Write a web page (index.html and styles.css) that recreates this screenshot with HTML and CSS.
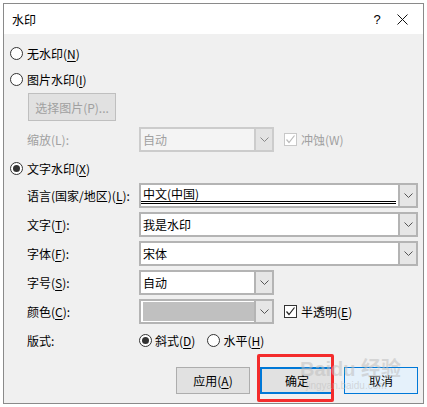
FILE: index.html
```html
<!DOCTYPE html>
<html lang="zh-CN">
<head>
    <meta charset="UTF-8">
    <title>水印</title>
    <link rel="stylesheet" href="styles.css">
</head>
<body>
    <div class="dialog">
        <div class="titlebar">
            <span class="title">水印</span>
            <span class="help">?</span>
            <span class="close">
                <svg width="11" height="11" viewBox="0 0 11 11"><path d="M0.5 0.5 L10.5 10.5 M10.5 0.5 L0.5 10.5" stroke="#111" stroke-width="1" fill="none"/></svg>
            </span>
        </div>

        <div class="content">
            <!-- watermark type -->
            <div class="radio-row"><span class="radio"></span><span>无水印(<u>N</u>)</span></div>
            <div class="radio-row"><span class="radio"></span><span>图片水印(<u>I</u>)</span></div>
            <div class="pic-btn">选择图片(P)...</div>

            <div class="field first disabled">
                <span class="label">缩放(L):</span>
                <div class="select narrow off">
                    <span class="value">自动</span>
                    <span class="arrow"><svg width="9" height="5" viewBox="0 0 9 5"><path d="M0.5 0.5 L4.5 4.5 L8.5 0.5" stroke="#888" fill="none"/></svg></span>
                </div>
                <span class="check off"><svg width="11" height="11" viewBox="0 0 11 11"><path d="M1.5 5.5 L4 8.5 L9.5 1.5" stroke="#bbb" stroke-width="1.2" fill="none"/></svg></span>
                <span class="check-text">冲蚀(W)</span>
            </div>

            <div class="radio-row text-mark"><span class="radio on"></span><span>文字水印(<u>X</u>)</span></div>

            <!-- text watermark settings -->
            <div class="field lang">
                <span class="label">语言(国家/地区)(<u>L</u>):</span>
                <div class="select wide">
                    <span class="value dbl">中文(中国)</span>
                    <span class="arrow"><svg width="9" height="5" viewBox="0 0 9 5"><path d="M0.5 0.5 L4.5 4.5 L8.5 0.5" stroke="#555" fill="none"/></svg></span>
                </div>
            </div>
            <div class="field">
                <span class="label">文字(<u>T</u>):</span>
                <div class="select wide">
                    <span class="value">我是水印</span>
                    <span class="arrow"><svg width="9" height="5" viewBox="0 0 9 5"><path d="M0.5 0.5 L4.5 4.5 L8.5 0.5" stroke="#555" fill="none"/></svg></span>
                </div>
            </div>
            <div class="field">
                <span class="label">字体(<u>F</u>):</span>
                <div class="select wide">
                    <span class="value">宋体</span>
                    <span class="arrow"><svg width="9" height="5" viewBox="0 0 9 5"><path d="M0.5 0.5 L4.5 4.5 L8.5 0.5" stroke="#555" fill="none"/></svg></span>
                </div>
            </div>
            <div class="field">
                <span class="label">字号(<u>S</u>):</span>
                <div class="select narrow">
                    <span class="value">自动</span>
                    <span class="arrow"><svg width="9" height="5" viewBox="0 0 9 5"><path d="M0.5 0.5 L4.5 4.5 L8.5 0.5" stroke="#555" fill="none"/></svg></span>
                </div>
            </div>
            <div class="field">
                <span class="label">颜色(<u>C</u>):</span>
                <div class="select narrow">
                    <span class="value"><span class="swatch"></span></span>
                    <span class="arrow"><svg width="9" height="5" viewBox="0 0 9 5"><path d="M0.5 0.5 L4.5 4.5 L8.5 0.5" stroke="#555" fill="none"/></svg></span>
                </div>
                <span class="check"><svg width="11" height="11" viewBox="0 0 11 11"><path d="M1.5 5.5 L4 8.5 L9.5 1.5" stroke="#222" stroke-width="1.2" fill="none"/></svg></span>
                <span class="check-text">半透明(<u>E</u>)</span>
            </div>
            <div class="field layout">
                <span class="label">版式:</span>
                <span class="radio on"></span><span class="opt">斜式(<u>D</u>)</span>
                <span class="radio second"></span><span class="opt">水平(<u>H</u>)</span>
            </div>

            <div class="buttons">
                <div class="btn">应用(<u>A</u>)</div>
                <div class="btn default">确定</div>
                <div class="btn cancel">取消</div>
            </div>
        </div>

        <!-- screenshot annotations -->
        <div class="mark-box"></div>
        <div class="baidu">
            <span class="baidu-logo">Baidu 经验</span>
            <span class="baidu-url">jingyan.baidu.com</span>
        </div>
    </div>
</body>
</html>
```

FILE: styles.css
```css
body {
    margin: 0;
    background: #ffffff;
    font-family: "Noto Sans CJK SC", "Microsoft YaHei", sans-serif;
    font-size: 12px;
    color: #000;
}
u {
    text-decoration-thickness: 1px;
    text-underline-offset: 2px;
}
.dialog {
    position: relative;
    margin: 3px 0 0 3px;
    width: 421px;
    height: 401px;
    box-sizing: border-box;
    border: 1px solid #8a8a8a;
    background: #f0f0f0;
}
.titlebar {
    height: 30px;
    background: #ffffff;
    display: flex;
    align-items: center;
    padding-left: 8px;
    padding-right: 6px;
}
.title {
    font-size: 12px;
}
.help {
    margin-left: auto;
    width: 20px;
    text-align: center;
    font-family: "Liberation Sans", sans-serif;
    font-size: 13px;
}
.close {
    width: 30px;
    display: flex;
    justify-content: center;
}
.content {
    padding: 6px 0 0 6px;
}
.radio-row {
    height: 26px;
    display: flex;
    align-items: center;
    gap: 4px;
}
.radio {
    width: 13px;
    height: 13px;
    box-sizing: border-box;
    border: 1px solid #333;
    border-radius: 50%;
    background: #fff;
    display: flex;
    align-items: center;
    justify-content: center;
    flex-shrink: 0;
}
.radio.on::after {
    content: "";
    width: 7px;
    height: 7px;
    border-radius: 50%;
    background: #333;
}
.pic-btn {
    margin: 1px 0 0 18px;
    width: 88px;
    height: 28px;
    box-sizing: border-box;
    border: 1px solid #bfbfbf;
    background: #e1e1e1;
    color: #a0a0a0;
    display: flex;
    align-items: center;
    justify-content: center;
}
.field {
    display: flex;
    align-items: center;
    margin: 4px 0 0 17px;
    height: 25px;
}
.field.first {
    margin-top: 6px;
}
.field.lang {
    margin-top: 2px;
}
.text-mark {
    margin-top: 3px;
}
.label {
    width: 112px;
    flex-shrink: 0;
}
.disabled {
    color: #a0a0a0;
}
.select {
    display: flex;
    height: 25px;
    box-sizing: border-box;
    border: 2px solid #b4b4b4;
    background: #fff;
}
.select.wide {
    width: 279px;
}
.select.narrow {
    width: 135px;
}
.select.off {
    border-color: #cccccc;
    background: #f4f4f4;
}
.value {
    flex: 1;
    display: flex;
    align-items: center;
    padding-left: 2px;
    color: #000;
}
.off .value {
    color: #a0a0a0;
}
.value.dbl {
    height: 19px;
    box-sizing: border-box;
    border-bottom: 3px double #000;
    margin-right: 2px;
    padding-top: 1px;
}
.swatch {
    display: block;
    width: 111px;
    height: 19px;
    background: #c0c0c0;
}
.arrow {
    width: 16px;
    border-left: 2px solid #b4b4b4;
    background: #e6e6e6;
    display: flex;
    align-items: center;
    justify-content: center;
}
.off .arrow {
    border-left-color: #cccccc;
    background: #e3e3e3;
}
.check {
    width: 13px;
    height: 13px;
    box-sizing: border-box;
    border: 1px solid #333;
    background: #fff;
    margin-left: 10px;
    display: flex;
    align-items: center;
    justify-content: center;
}
.check.off {
    border-color: #c8c8c8;
}
.check-text {
    margin-left: 4px;
}
.field.layout {
    margin-top: 6px;
    height: 20px;
}
.opt {
    margin-left: 3px;
}
.radio.second {
    margin-left: 12px;
}
.buttons {
    display: flex;
    justify-content: flex-end;
    gap: 10px;
    margin-top: 17px;
    padding-right: 5px;
}
.btn {
    width: 74px;
    height: 27px;
    box-sizing: border-box;
    border: 1px solid #adadad;
    background: #e1e1e1;
    display: flex;
    align-items: center;
    justify-content: center;
}
.btn.default {
    border: 2px solid #0078d7;
}
.btn.cancel {
    border-color: #0078d7;
    background: #e5f1fb;
}
.mark-box {
    position: absolute;
    left: 253px;
    top: 350px;
    width: 77px;
    height: 48px;
    box-sizing: border-box;
    border: 3px solid #f42c2c;
    border-radius: 2px;
}
.baidu {
    position: absolute;
    left: 296px;
    top: 354px;
    display: flex;
    flex-direction: column;
    color: rgba(190, 190, 190, 0.55);
    pointer-events: none;
}
.baidu-logo {
    font-family: "Liberation Sans", "Noto Sans CJK SC", sans-serif;
    font-size: 20px;
    font-weight: bold;
    line-height: 22px;
}
.baidu-url {
    font-family: "Liberation Sans", sans-serif;
    font-size: 10px;
    line-height: 12px;
    margin-left: 6px;
}
```
